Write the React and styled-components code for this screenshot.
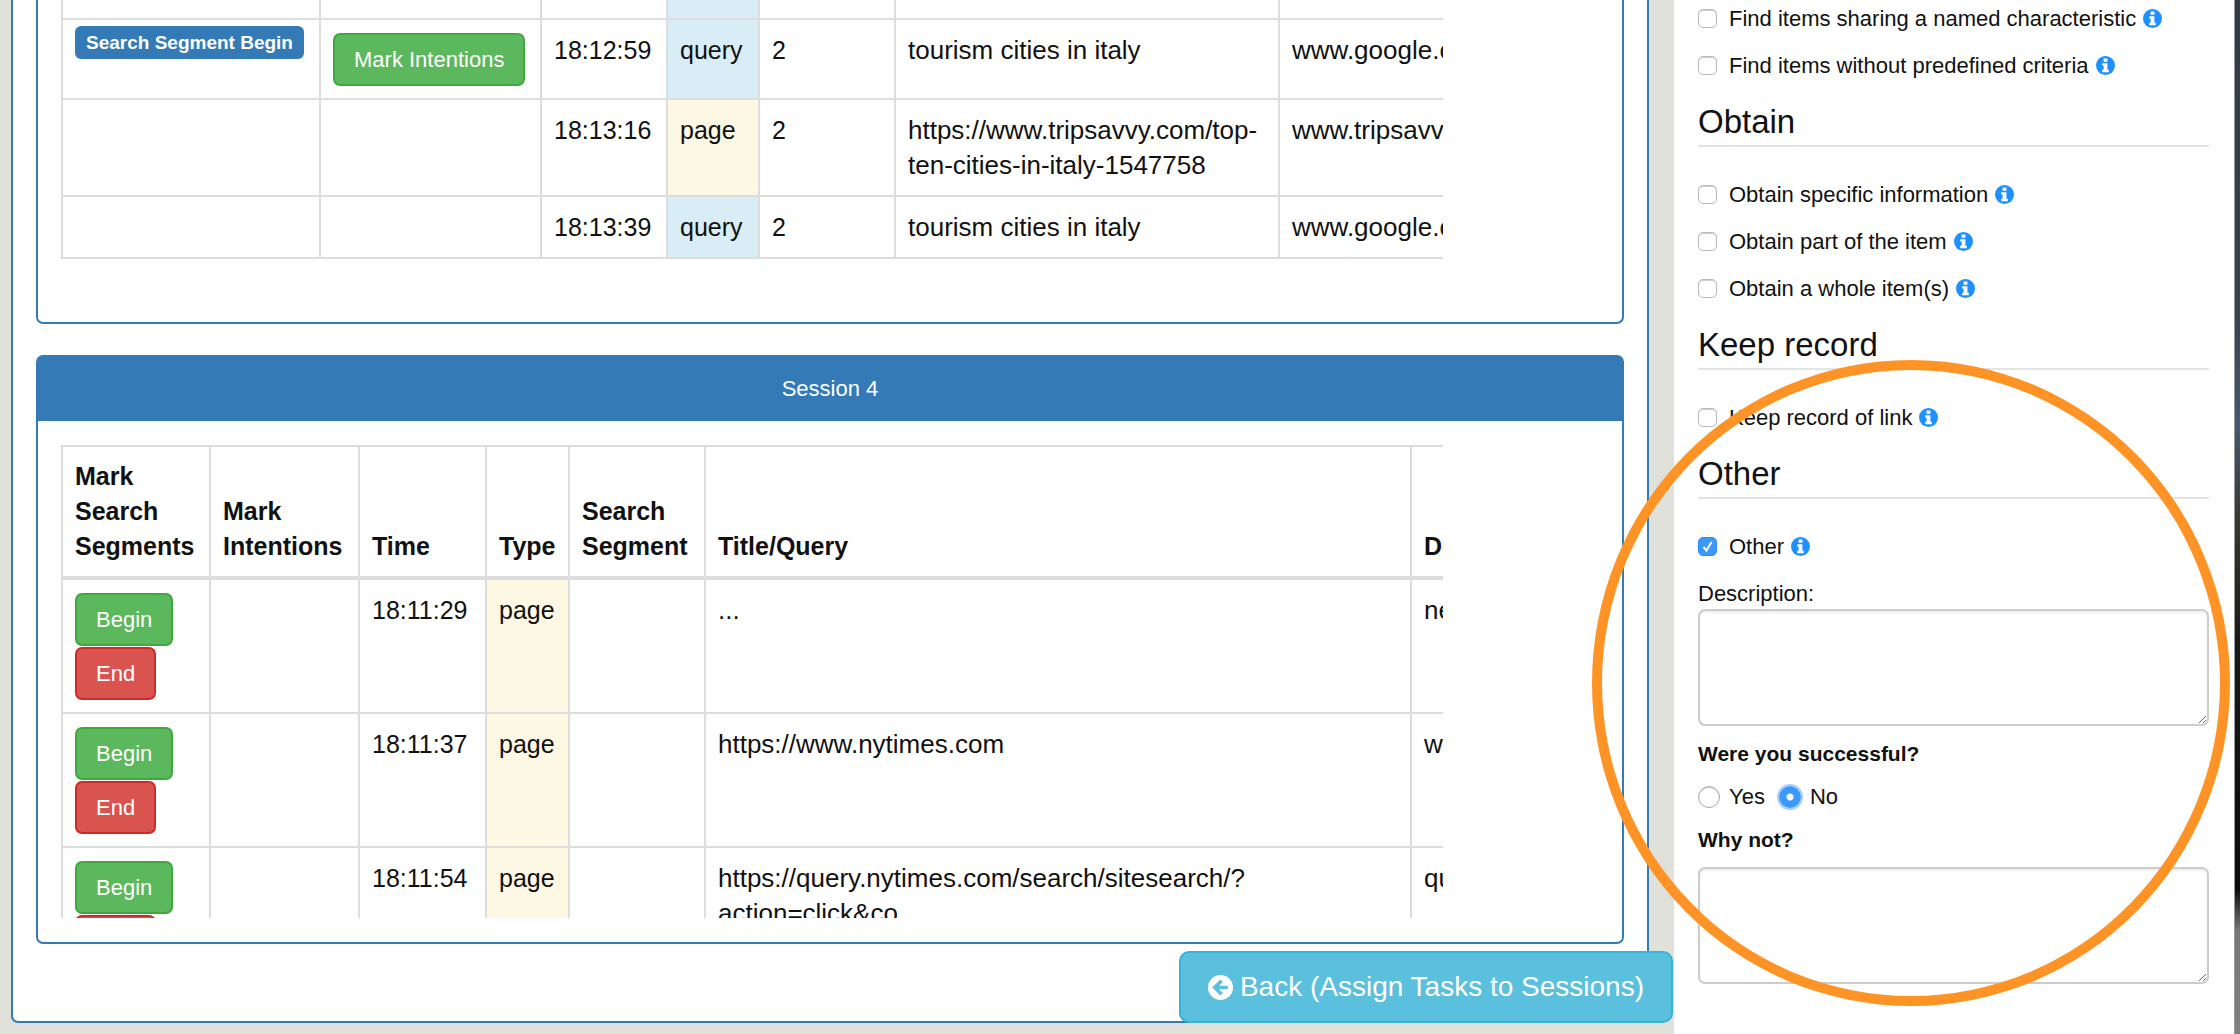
import React from "react";
import styled, { createGlobalStyle, css } from "styled-components";

const blue = "#337ab7";
const line = "#dddddd";

const GlobalStyle = createGlobalStyle`
  * { box-sizing: border-box; }
  html, body { margin: 0; }
  body {
    overflow: hidden;
    background: #dfe1da;
    color: #111;
    font-family: "Liberation Sans", Arial, Helvetica, sans-serif;
    font-size: 25px;
    line-height: 35px;
  }
`;

const Page = styled.div`
  position: relative;
  display: flex;
  min-height: 100vh;
`;

const Main = styled.main`
  flex: 1;
  min-width: 0;
  padding: 0 25px 11px 11px;
`;

const Workspace = styled.section`
  display: flex;
  flex-direction: column;
  padding: 0 23px;
  background: #fff;
  border: 2px solid ${blue};
  border-top: 0;
  border-radius: 0 0 7px 7px;
`;

const Panel = styled.section`
  border: 2px solid ${blue};
  border-radius: 7px;
  ${(p) => p.$continued && css`
    border-top: 0;
    border-radius: 0 0 7px 7px;
    margin-bottom: 31px;
  `}
`;

const PanelHeading = styled.h2`
  margin: 0;
  padding: 15px;
  background: ${blue};
  color: #fff;
  font-size: 22px;
  font-weight: 400;
  line-height: 34px;
  text-align: center;
`;

const PanelBody = styled.div`
  padding: ${(p) => (p.$continued ? "0 25px 63px 23px" : "24px 25px 24px 23px")};
`;

const TableClip = styled.div`
  width: 90%;
  max-height: 473px;
  overflow: hidden;
`;

const Table = styled.table`
  width: ${(p) => p.$width}px;
  table-layout: fixed;
  border-collapse: collapse;
`;

const Col = styled.col`
  width: ${(p) => p.$width}px;
`;

const Th = styled.th`
  padding: 12px;
  border: 2px solid ${line};
  border-bottom-width: 4px;
  text-align: left;
  vertical-align: bottom;
`;

const typeColors = { query: "#d9edf7", page: "#fcf8e3" };

const Td = styled.td`
  padding: ${(p) => (p.$tight ? "6px" : "13px")} 12px 12px;
  border: 2px solid ${line};
  vertical-align: top;
  background: ${(p) => typeColors[p.$type] || "transparent"};
`;

const AddressTd = styled(Td)`
  font-size: 26px;
`;

const PartRow = styled.tr`
  height: 19px;
  & > td { padding: 0; border-top: 0; }
`;

const Badge = styled.span`
  display: block;
  width: max-content;
  padding: 0 11px;
  background: ${blue};
  border-radius: 6px;
  color: #fff;
  font-size: 19px;
  font-weight: 700;
  line-height: 33px;
`;

const tones = {
  success: ["#5cb85c", "#3fa83f"],
  danger: ["#d9534f", "#d02a26"],
  info: ["#5bc0de", "#35b3d8"],
};

const Button = styled.button`
  display: block;
  padding: 0 19px;
  border: 2px solid ${(p) => tones[p.$tone][1]};
  border-radius: 7px;
  background: ${(p) => tones[p.$tone][0]};
  color: #fff;
  font-family: inherit;
  font-size: 22px;
  line-height: 49px;
  white-space: nowrap;
`;

const ButtonStack = styled.div`
  display: flex;
  flex-direction: column;
  align-items: flex-start;
  gap: 1px;
`;

const BackButton = styled(Button)`
  display: flex;
  align-items: center;
  gap: 7px;
  align-self: flex-end;
  margin: 7px -49px -2px 0;
  padding: 0 27px;
  border-radius: 10px;
  font-size: 28px;
  line-height: 68px;
`;

const Sidebar = styled.aside`
  flex: 0 0 25%;
  padding: 0 25px 0 24px;
  background: #fff;
  font-size: 22px;
  line-height: 31px;
`;

const Group = styled.section`
  display: flex;
  flex-direction: column;
  gap: 16px;
  margin-bottom: ${(p) => (p.$last ? 0 : 20)}px;
  padding-top: ${(p) => (p.$continued ? 3 : 0)}px;
`;

const GroupTitle = styled.h3`
  margin: 0 0 16px;
  padding-bottom: 2px;
  border-bottom: 2px solid #e4e4e4;
  font-size: 33px;
  font-weight: 400;
  line-height: 42px;
`;

const Option = styled.label`
  display: flex;
  align-items: center;
`;

const Checkbox = styled.input`
  appearance: none;
  width: 19px;
  height: 19px;
  margin: 0 12px 0 0;
  border: 1px solid #bbb;
  border-radius: 5px;
  background: #fff;
  box-shadow: inset 0 1px 1px #ccc;
  &:checked {
    border-color: #2f8bf5;
    background: #3b99fc url("data:image/svg+xml,%3Csvg xmlns='http://www.w3.org/2000/svg' viewBox='0 0 17 17'%3E%3Cpath d='M4.5 9l3 3.5 5-8.500' fill='none' stroke='white' stroke-width='2'/%3E%3C/svg%3E") center / 17px no-repeat;
    box-shadow: none;
  }
`;

const Radio = styled.input`
  appearance: none;
  width: 22px;
  height: 22px;
  margin: 0 9px 0 0;
  border: 1px solid #aaa;
  border-radius: 50%;
  background: #fff;
  box-shadow: inset 0 1px 1px #ccc;
  &:checked {
    border-color: #3b99fc;
    background: radial-gradient(circle, #fff 3px, #3b99fc 4px);
    box-shadow: 0 0 0 2px #a5cefb;
  }
`;

const RadioRow = styled.div`
  display: flex;
  gap: 14px;
  margin: 12px 0;
`;

const Field = styled.div`
  display: flex;
  flex-direction: column;
`;

const Question = styled.legend`
  padding: 0;
  font-size: 21px;
  font-weight: 700;
`;

const QuestionLabel = styled.label`
  margin-bottom: 12px;
  font-size: 21px;
  font-weight: 700;
`;

const Fieldset = styled.fieldset`
  margin: 0;
  padding: 0;
  border: 0;
`;

const TextArea = styled.textarea`
  width: 100%;
  height: 117px;
  margin-bottom: ${(p) => (p.$spaced ? 12 : 0)}px;
  padding: 8px;
  border: 2px solid #ccc;
  border-radius: 7px;
  background: #fff;
  box-shadow: inset 0 2px 2px #eee;
  font: inherit;
  resize: vertical;
`;

const Desktop = styled.div`
  flex: 0 0 6px;
  border-left: 1px solid #999;
  background: linear-gradient(#323a45, #39424d 30%, #465872 41%, #393a32 50%, #181a18 62%, #0b0c0b 86%, #77777a 90%, #808080);
`;

const InfoSvg = styled.svg`
  width: 19px;
  height: 19px;
  margin-left: 7px;
`;

const ArrowSvg = styled.svg`
  width: 25px;
  height: 25px;
`;

const Highlight = styled.div`
  position: absolute;
  top: 360px;
  right: 10px;
  width: 638px;
  height: 646px;
  border: 10px solid #ff9326;
  border-radius: 50%;
  pointer-events: none;
`;

const Info = () => (
  <InfoSvg viewBox="0 0 20 20" aria-hidden="true">
    <circle cx="10" cy="10" r="10" fill="#1e90ff" />
    <path d="M8 2.500h4v3.500H8zM6.500 7.500H12v7h1.500V17h-7v-2.500H8V10H6.500z" fill="#fff" />
  </InfoSvg>
);

const Check = ({ label, checked }) => (
  <Option>
    <Checkbox type="checkbox" defaultChecked={checked} />
    {label}
    <Info />
  </Option>
);

const sessionThree = [
  { marked: true, time: "18:12:59", type: "query", segment: "2", title: "tourism cities in italy", domain: "www.google.com" },
  { time: "18:13:16", type: "page", segment: "2", title: "https://www.tripsavvy.com/top-ten-cities-in-italy-1547758", domain: "www.tripsavvy.com" },
  { time: "18:13:39", type: "query", segment: "2", title: "tourism cities in italy", domain: "www.google.com" },
];

const sessionFour = [
  { time: "18:11:29", type: "page", title: "...", domain: "newtab" },
  { time: "18:11:37", type: "page", title: "https://www.nytimes.com", domain: "www.nytimes.com" },
  { time: "18:11:54", type: "page", title: "https://query.nytimes.com/search/sitesearch/?action=click&co...", domain: "query.nytimes.com" },
];

const columnsThree = [258, 221, 126, 92, 136, 384, 320];
const columnsFour = [148, 149, 127, 83, 136, 706, 320];
const headings = ["Mark Search Segments", "Mark Intentions", "Time", "Type", "Search Segment", "Title/Query", "Domain"];
const sum = (list) => list.reduce((a, b) => a + b, 0);

const Columns = ({ widths }) => (
  <colgroup>
    {widths.map((w, i) => <Col key={i} $width={w} />)}
  </colgroup>
);

export default function App() {
  return (
    <>
      <GlobalStyle />
      <Page>
        <Main>
          <Workspace>
            <Panel $continued>
              <PanelBody $continued>
                <TableClip>
                  <Table $width={sum(columnsThree)}>
                    <Columns widths={columnsThree} />
                    <tbody>
                      <PartRow>
                        <Td /><Td /><Td /><Td $type="query" /><Td /><Td /><Td />
                      </PartRow>
                      {sessionThree.map((row) => (
                        <tr key={row.time}>
                          <Td $tight>{row.marked && <Badge>Search Segment Begin</Badge>}</Td>
                          <Td>{row.marked && <Button type="button" $tone="success">Mark Intentions</Button>}</Td>
                          <Td>{row.time}</Td>
                          <Td $type={row.type}>{row.type}</Td>
                          <Td>{row.segment}</Td>
                          <AddressTd>{row.title}</AddressTd>
                          <AddressTd>{row.domain}</AddressTd>
                        </tr>
                      ))}
                    </tbody>
                  </Table>
                </TableClip>
              </PanelBody>
            </Panel>
            <Panel>
              <PanelHeading>Session 4</PanelHeading>
              <PanelBody>
                <TableClip>
                  <Table $width={sum(columnsFour)}>
                    <Columns widths={columnsFour} />
                    <thead>
                      <tr>{headings.map((h) => <Th key={h}>{h}</Th>)}</tr>
                    </thead>
                    <tbody>
                      {sessionFour.map((row) => (
                        <tr key={row.time}>
                          <Td>
                            <ButtonStack>
                              <Button type="button" $tone="success">Begin</Button>
                              <Button type="button" $tone="danger">End</Button>
                            </ButtonStack>
                          </Td>
                          <Td />
                          <Td>{row.time}</Td>
                          <Td $type={row.type}>{row.type}</Td>
                          <Td />
                          <AddressTd>{row.title}</AddressTd>
                          <AddressTd>{row.domain}</AddressTd>
                        </tr>
                      ))}
                    </tbody>
                  </Table>
                </TableClip>
              </PanelBody>
            </Panel>
            <BackButton type="button" $tone="info">
              <ArrowSvg viewBox="0 0 24 24" aria-hidden="true">
                <circle cx="12" cy="12" r="12" fill="#fff" />
                <path d="M13 5.500L6.500 12l6.500 6.500M7 12h12" fill="none" stroke="#5bc0de" strokeWidth="3.500" />
              </ArrowSvg>
              Back (Assign Tasks to Sessions)
            </BackButton>
          </Workspace>
        </Main>
        <Sidebar>
          <Group $continued>
            <Check label="Find items sharing a named characteristic" />
            <Check label="Find items without predefined criteria" />
          </Group>
          <Group>
            <GroupTitle>Obtain</GroupTitle>
            <Check label="Obtain specific information" />
            <Check label="Obtain part of the item" />
            <Check label="Obtain a whole item(s)" />
          </Group>
          <Group>
            <GroupTitle>Keep record</GroupTitle>
            <Check label="Keep record of link" />
          </Group>
          <Group $last>
            <GroupTitle>Other</GroupTitle>
            <Check label="Other" checked />
            <Field>
              <label htmlFor="description">Description:</label>
              <TextArea id="description" $spaced />
              <Fieldset>
                <Question>Were you successful?</Question>
                <RadioRow>
                  <Option><Radio type="radio" name="success" />Yes</Option>
                  <Option><Radio type="radio" name="success" defaultChecked />No</Option>
                </RadioRow>
              </Fieldset>
              <QuestionLabel htmlFor="why">Why not?</QuestionLabel>
              <TextArea id="why" />
            </Field>
          </Group>
        </Sidebar>
        <Desktop />
        <Highlight />
      </Page>
    </>
  );
}
